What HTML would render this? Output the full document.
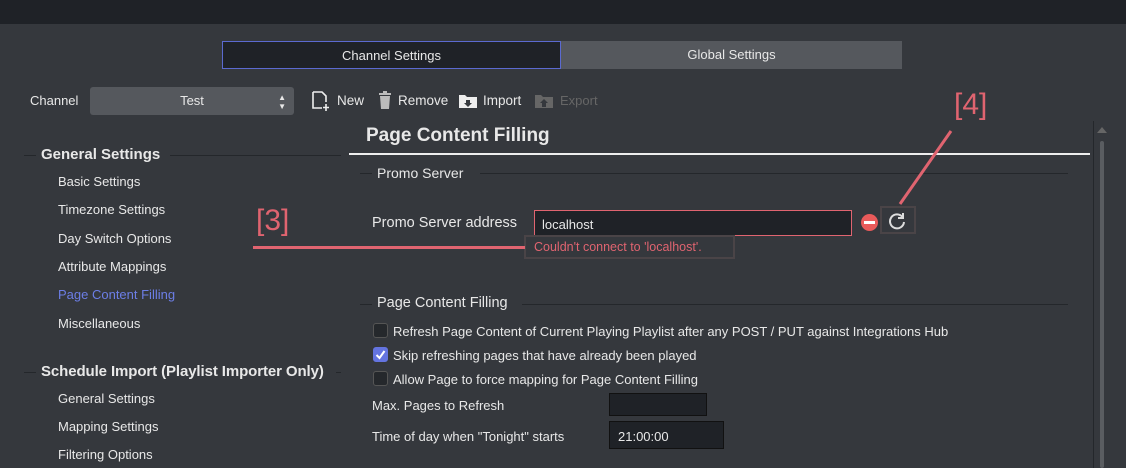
<!DOCTYPE html>
<html><head><meta charset="utf-8"><style>
*{margin:0;padding:0;box-sizing:border-box}
body{width:1126px;height:468px;background:#35383d;font-family:"Liberation Sans",sans-serif;color:#e8e8e8;position:relative;overflow:hidden;font-size:13px}
.a{position:absolute;white-space:nowrap}
.top{left:0;top:0;width:1126px;height:24px;background:#1f2227}
.tab{top:41px;height:28px;line-height:27px;text-align:center;font-size:13px}
.hl{position:absolute;height:1px;background:#24272b}
.nav{left:58px;font-size:13px}
.cb{width:15px;height:15px;border:1px solid #555;background:#25282c;border-radius:3px}
.red{color:#e06470}
</style></head><body>
<div class="a top"></div>
<div class="a tab" style="left:222px;width:339px;background:#1f2227;border:1px solid #5b6ad0">Channel Settings</div>
<div class="a tab" style="left:561px;width:341px;background:#55585d">Global Settings</div>

<div class="a" style="left:30px;top:93px">Channel</div>
<div class="a" style="left:90px;top:87px;width:204px;height:28px;background:#55585d;border-radius:3px;text-align:center;line-height:28px">Test<span style="position:absolute;right:8px;font-size:8px;line-height:9px;top:6px">▲<br>▼</span></div>
<svg class="a" style="left:311px;top:91px" width="20" height="20" viewBox="0 0 20 20" fill="none" stroke="#eee" stroke-width="1.6"><path d="M2 1h9l4 4v6M2 1v16h9"/><path d="M15 13v7M12 16.5h6"/></svg>
<div class="a" style="left:337px;top:93px;font-size:13.5px">New</div>
<svg class="a" style="left:378px;top:91px" width="14" height="18" viewBox="0 0 14 18" fill="#bbb"><rect x="1" y="2" width="12" height="2"/><rect x="5" y="0" width="4" height="2"/><path d="M2 5h10l-1 13H3z"/></svg>
<div class="a" style="left:398px;top:93px;font-size:13.5px">Remove</div>
<svg class="a" style="left:458px;top:93px" width="20" height="16" viewBox="0 0 20 16" fill="#eee"><path d="M1 2h6l2 2h10v11H1z"/><path d="M8 7h4v3h2l-4 4-4-4h2z" fill="#35383d"/></svg>
<div class="a" style="left:483px;top:93px;font-size:13.5px">Import</div>
<svg class="a" style="left:534px;top:93px" width="20" height="16" viewBox="0 0 20 16" fill="#666"><path d="M1 2h6l2 2h10v11H1z"/><path d="M10 6l4 4h-2v4H8v-4H6z" fill="#35383d"/></svg>
<div class="a" style="left:560px;top:93px;color:#666">Export</div>

<div class="hl" style="left:24px;top:155px;width:12px"></div>
<div class="a" style="left:41px;top:146px;font-weight:bold;font-size:15px">General Settings</div>
<div class="hl" style="left:170px;top:155px;width:171px"></div>
<div class="a nav" style="top:174px">Basic Settings</div>
<div class="a nav" style="top:202px">Timezone Settings</div>
<div class="a nav" style="top:231px">Day Switch Options</div>
<div class="a nav" style="top:259px">Attribute Mappings</div>
<div class="a nav" style="top:287px;color:#6c7ee6">Page Content Filling</div>
<div class="a nav" style="top:316px">Miscellaneous</div>
<div class="hl" style="left:24px;top:372px;width:12px"></div>
<div class="a" style="left:41px;top:363px;font-weight:bold;font-size:15px;letter-spacing:-0.1px">Schedule Import (Playlist Importer Only)</div>
<div class="hl" style="left:336px;top:372px;width:5px"></div>
<div class="a nav" style="top:391px">General Settings</div>
<div class="a nav" style="top:419px">Mapping Settings</div>
<div class="a nav" style="top:447px">Filtering Options</div>

<div class="a" style="left:366px;top:125px;font-weight:bold;font-size:19px">Page Content Filling</div>
<div class="a" style="left:349px;top:153px;width:741px;height:2px;background:#eee"></div>
<div class="hl" style="left:360px;top:173px;width:12px"></div>
<div class="a" style="left:377px;top:165px;font-size:14px">Promo Server</div>
<div class="hl" style="left:480px;top:173px;width:588px"></div>

<div class="a" style="left:372px;top:215px;font-size:14.5px">Promo Server address</div>
<div class="a" style="left:534px;top:210px;width:318px;height:26px;background:#1f2227;border:1px solid #e06470;padding:6px 7px">localhost</div>
<div class="a" style="left:861px;top:214px;width:17px;height:17px;border-radius:50%;background:#e85a5a"><div style="position:absolute;left:3px;top:7px;width:11px;height:3px;background:#fff"></div></div>
<div class="a" style="left:880px;top:206px;width:36px;height:28px;border:2px solid #4a4447"></div>
<svg class="a" style="left:887px;top:211px" width="20" height="20" viewBox="0 0 20 20" fill="none" stroke="#ddd" stroke-width="2"><path d="M15.5 6A7 7 0 1 0 17 11"/><path d="M16 2v5h-5"/></svg>
<div class="a red" style="left:524px;top:235px;width:211px;height:24px;border:2px solid #4a4447;padding:3px 8px;font-size:12.5px">Couldn't connect to 'localhost'.</div>

<div class="a red" style="left:256px;top:204px;font-size:30px">[3]</div>
<div class="a" style="left:253px;top:246px;width:272px;height:3px;background:#e06470"></div>
<div class="a red" style="left:954px;top:88px;font-size:30px">[4]</div>
<svg class="a" style="left:895px;top:128px" width="60" height="80"><line x1="56" y1="3" x2="5" y2="76" stroke="#e06470" stroke-width="3"/></svg>

<div class="hl" style="left:360px;top:304px;width:12px"></div>
<div class="a" style="left:377px;top:295px;font-size:14.5px">Page Content Filling</div>
<div class="hl" style="left:522px;top:304px;width:546px"></div>
<div class="a cb" style="left:373px;top:323px"></div>
<div class="a" style="left:393px;top:324px">Refresh Page Content of Current Playing Playlist after any POST / PUT against Integrations Hub</div>
<div class="a cb" style="left:373px;top:347px;background:#6474e0;border-color:#6474e0"><svg width="13" height="13" viewBox="0 0 13 13" style="position:absolute;left:0;top:0"><path d="M2.5 7l3 3 5-7" stroke="#fff" stroke-width="2" fill="none"/></svg></div>
<div class="a" style="left:393px;top:348px">Skip refreshing pages that have already been played</div>
<div class="a cb" style="left:373px;top:371px"></div>
<div class="a" style="left:393px;top:372px">Allow Page to force mapping for Page Content Filling</div>
<div class="a" style="left:372px;top:398px">Max. Pages to Refresh</div>
<div class="a" style="left:609px;top:393px;width:98px;height:23px;background:#1f2227;border:1px solid #111"></div>
<div class="a" style="left:372px;top:429px">Time of day when "Tonight" starts</div>
<div class="a" style="left:609px;top:421px;width:115px;height:28px;background:#1f2227;border:1px solid #111;padding:7px 8px">21:00:00</div>

<div class="a" style="left:1093px;top:121px;width:1px;height:347px;background:#24272b"></div>
<div class="a" style="left:1097px;top:127px;width:0;height:0;border-left:5px solid transparent;border-right:5px solid transparent;border-bottom:6px solid #666"></div>
<div class="a" style="left:1100px;top:141px;width:4px;height:327px;background:#5a5d61;border-radius:2px"></div>
</body></html>
